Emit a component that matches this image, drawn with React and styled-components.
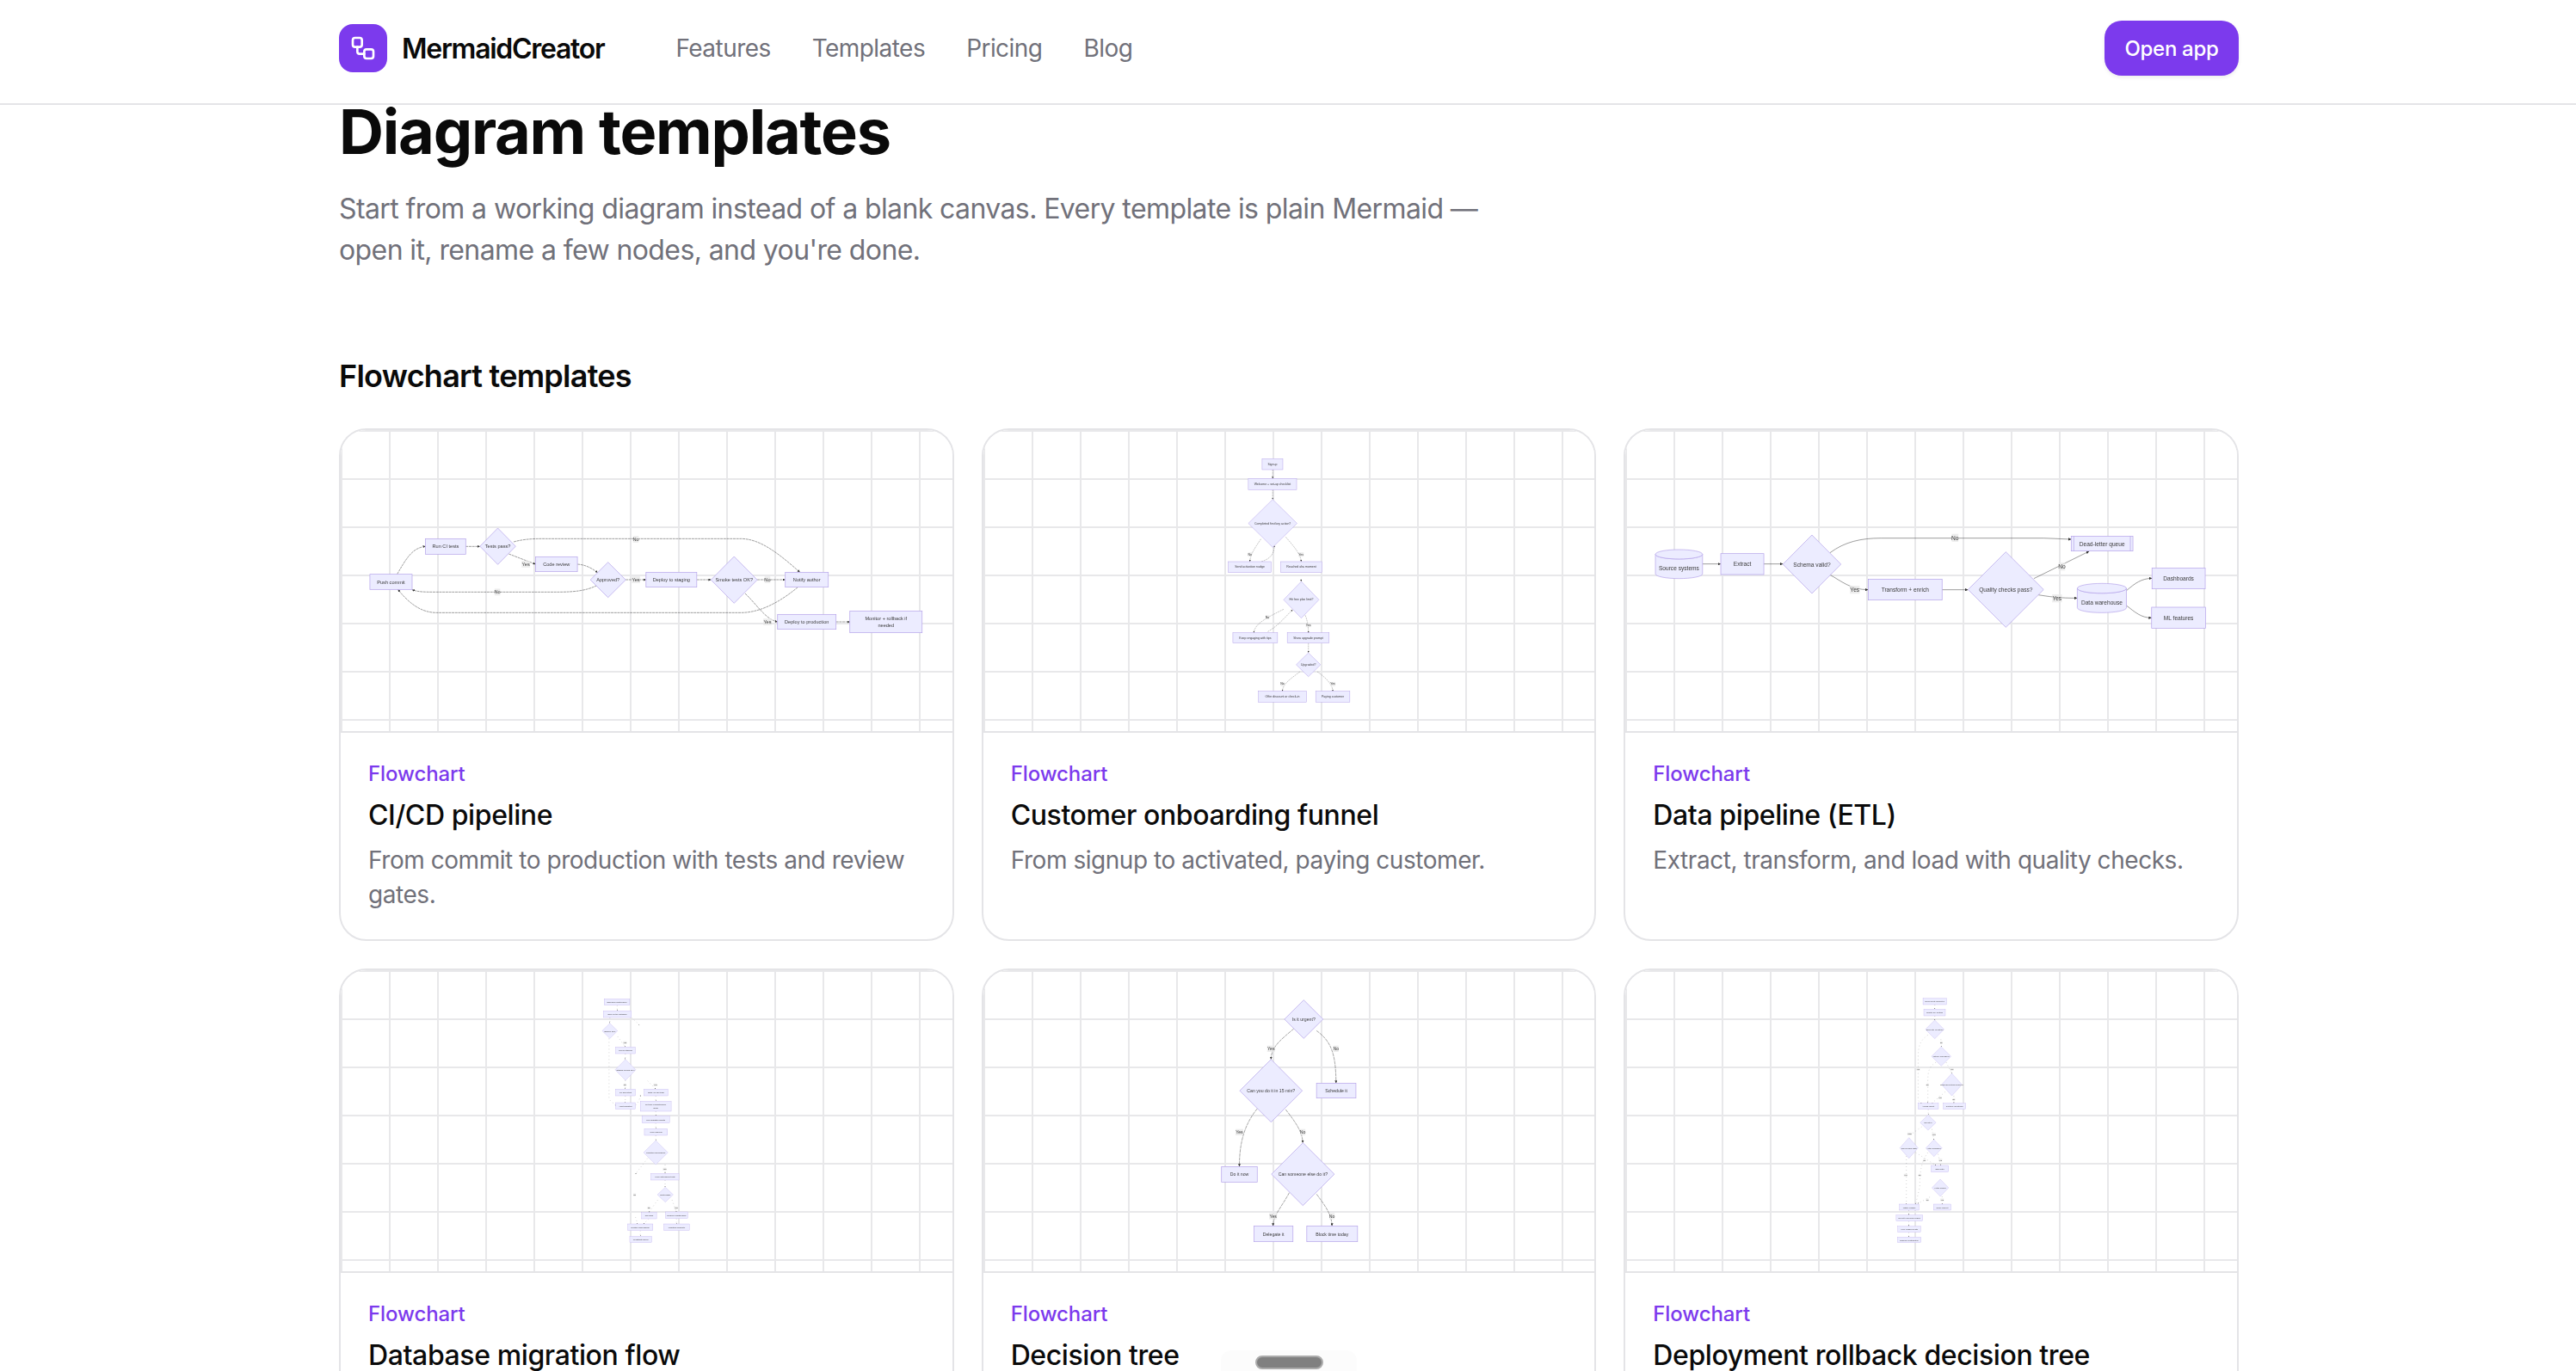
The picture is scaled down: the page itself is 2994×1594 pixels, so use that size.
import React from "react";
import styled, { createGlobalStyle } from "styled-components";
import { Workflow } from "lucide-react";

const Global = createGlobalStyle`
  html, body { margin: 0; padding: 0; height: 100%; overflow: hidden; background: #fff; }
  body { font-family: Inter, "Liberation Sans", sans-serif; color: #0a0a0a; }
  * { box-sizing: border-box; }
`;

const Page = styled.div`height: 1594px; overflow: hidden; background: #fff;`;
const Header = styled.header`height: 122px; border-bottom: 2px solid #e4e4e7; background: #fff; position: relative; z-index: 2;`;
const HeaderInner = styled.div`width: 2208px; height: 112px; margin: 0 auto; display: flex; align-items: center; transform: translateX(1px);`;
const Brand = styled.div`display: flex; align-items: center; gap: 17px; margin-right: 83px;`;
const LogoBox = styled.div`width: 56px; height: 56px; border-radius: 16px; background: #7c3aed; color: #fff; display: flex; align-items: center; justify-content: center;`;
const BrandName = styled.span`font-size: 32px; font-weight: 600; letter-spacing: -1.28px;`;
const Nav = styled.nav`display: flex; gap: 48px; flex: 1;`;
const NavLink = styled.a`font-size: 28px; color: #71717a; letter-spacing: -0.55px;`;
const OpenButton = styled.button`width: 156px; height: 64px; border: 0; border-radius: 20px; background: #7c3aed; color: #fff; font: 500 24px Inter, sans-serif; letter-spacing: -0.3px; box-shadow: 0 2px 4px rgba(0,0,0,.08);`;

const Main = styled.main`width: 2208px; margin: 0 auto; transform: translateX(1px);`;
const Title = styled.h1`font-size: 72px; line-height: 80px; font-weight: 700; letter-spacing: -1.22px; margin: -9px 0 26px;`;
const Lead = styled.p`font-size: 32px; line-height: 48px; letter-spacing: -0.6px; color: #71717a; margin: 0 0 98px; max-width: 1344px;`;
const SectionTitle = styled.h2`font-size: 36px; line-height: 48px; font-weight: 600; letter-spacing: -0.75px; margin: 0 0 37px;`;
const Grid = styled.div`display: grid; grid-template-columns: repeat(3, 1fr); gap: 32px;`;
const Card = styled.article`border: 2px solid #e4e4e7; border-radius: 32px; overflow: hidden; background: #fff;`;
const Preview = styled.div`
  height: 352px; border-bottom: 2px solid #e4e4e7; background-color: #fff;
  background-image: linear-gradient(to right, #e8e8ea 2px, transparent 2px), linear-gradient(to bottom, #e8e8ea 2px, transparent 2px);
  background-size: 56px 56px;
`;
const DiagramSvg = styled.svg`display: block; filter: blur(0.4px);`;
const NodeRect = styled.rect`fill: #ececff; stroke: #b5a3ea;`;
const NodePoly = styled.polygon`fill: #ececff; stroke: #b5a3ea;`;
const NodePath = styled.path`fill: #ececff; stroke: #b5a3ea;`;
const Edge = styled.path`fill: none; stroke: #3d3d3d;`;
const NodeLine = styled.line`stroke: #b5a3ea;`;
const LabelBg = styled.rect`fill: rgba(232, 232, 232, 0.8);`;
const DiagramText = styled.text`font-family: "Liberation Sans", sans-serif; fill: #3a3a3a; text-anchor: middle; dominant-baseline: central;`;
const ArrowHead = styled.path`fill: #333;`;
const Info = styled.div`padding: 32px 32px 32px;`;
const Tag = styled.div`font-size: 24px; line-height: 32px; font-weight: 500; letter-spacing: -0.1px; color: #7c3aed;`;
const CardTitle = styled.h3`font-size: 32px; line-height: 44px; font-weight: 500; letter-spacing: -0.4px; margin: 10px 0 10px; color: #0a0a0a;`;
const CardDesc = styled.p`font-size: 28px; line-height: 40px; letter-spacing: -0.45px; color: #71717a; margin: 0; min-height: 80px;`;
const Halo = styled.div`position: fixed; left: 1419px; top: 1570px; width: 158px; height: 24px; border-radius: 12px 12px 0 0; background: rgba(252,252,252,.9); display: flex; justify-content: center; align-items: flex-start; padding-top: 6px; z-index: 5;`;
const Pill = styled.div`width: 79px; height: 16px; border-radius: 8px; background: #808080; border: 2px solid #ababab;`;

const SX = 1568 / 740;
const r = (x1, y1, x2, y2, t) => ({ k: "r", x1, y1, x2, y2, t });
const d = (x1, y1, x2, y2, t) => ({ k: "d", x1, y1, x2, y2, t });
const c = (x1, y1, x2, y2, t) => ({ k: "c", x1, y1, x2, y2, t });
const s = (x1, y1, x2, y2, t) => ({ k: "s", x1, y1, x2, y2, t });

const DIAGRAMS = [
  {
    dx: -6.67, dy: -10, fs: 5.6, sw: 0.7, es: 0.5, ar: 3, dash: "3 0.7",
    nodes: [
      r(86,533,190,586,"Push commit"), r(223,409,322,463,"Run CI tests"), d(357,372,445,499,"Tests pass?"),
      r(494,472,597,524,"Code review"), d(629,491,716,614,"Approved?"), r(766,526,891,578,"Deploy to staging"),
      d(926,471,1040,634,"Smoke tests OK?"), r(1109,526,1215,578,"Notify author"), r(1090,673,1234,725,"Deploy to production"),
      r(1268,661,1446,737,"Monitor + rollback if\nneeded"),
    ],
    edges: [
      "M153,533 C175,480 190,440 223,436", "M322,436 L357,436", "M428,462 L494,498",
      "M440,420 C470,408 500,409 520,409 L1000,409 C1050,409 1100,470 1145,526",
      "M597,498 C620,500 635,515 647,527", "M645,572 C620,590 590,595 550,595 L250,595 C220,595 205,595 190,587",
      "M716,552 L766,552", "M891,552 L926,552", "M1040,552 L1109,552", "M1010,600 C1040,640 1060,690 1090,699",
      "M1140,578 C1100,625 1050,667 1000,667 L250,667 C210,667 180,630 155,586", "M1234,699 L1268,699",
    ],
    labels: [[741,411,"No"],[470,498,"Yes"],[400,595,"No"],[741,552,"Yes"],[1065,552,"No"],[1065,699,"Yes"]],
  },
  {
    dx: -2.67, dy: -10, fs: 3.5, sw: 0.5, es: 0.3, ar: 2, dash: "2 0.8",
    nodes: [
      r(692,130,743,168,"Signup"), r(658,199,777,238,"Welcome + set-up checklist"), d(658,272,778,439,"Completed first key action?"),
      r(609,489,714,527,"Send activation nudge"), r(738,489,839,527,"Reached aha moment"), d(745,558,832,686,"Hit free plan limit?"),
      r(620,737,730,773,"Keep engaging with tips"), r(754,737,857,773,"Show upgrade prompt"), d(776,807,836,890,"Upgraded?"),
      r(683,941,801,979,"Offer discount or check-in"), r(824,941,908,979,"Paying customer"),
    ],
    edges: [
      "M718,168 L718,199", "M718,238 L718,272", "M689,410 C675,440 662,465 662,489", "M690,489 C710,480 722,465 722,433",
      "M750,403 C770,435 788,465 788,489", "M788,550 L788,558", "M745,655 C710,680 672,705 672,737", "M706,733 C730,715 750,680 767,657",
      "M798,676 C803,690 806,715 806,737", "M806,773 L806,807", "M785,873 C765,895 742,915 742,941", "M828,873 C845,890 866,915 866,941",
    ],
    labels: [[662,464,"No"],[788,464,"Yes"],[705,683,"No"],[806,710,"Yes"],[742,916,"No"],[866,916,"Yes"]],
  },
  {
    dx: -9.33, dy: -10, fs: 6.6, sw: 0.7, es: 0.5, ar: 3.4, dash: "none",
    nodes: [
      c(94,447,210,548,"Source systems"), r(255,461,361,534,"Extract"), d(408,396,551,600,"Schema valid?"),
      r(618,550,800,623,"Transform + enrich"), d(864,455,1050,718,"Quality checks pass?"), s(1118,400,1270,452,"Dead-letter queue"),
      c(1133,565,1254,667,"Data warehouse"), r(1317,511,1448,584,"Dashboards"), r(1316,648,1449,721,"ML features"),
    ],
    edges: [
      "M210,497 L255,497", "M361,497 L408,497", "M524,458 C560,420 600,407 650,407 L1050,407 L1118,411",
      "M524,535 C550,555 575,587 618,587", "M800,587 L864,587", "M1026,548 L1162,453", "M1037,605 C1060,610 1090,617 1133,616",
      "M1254,590 C1275,565 1290,548 1317,547", "M1254,642 C1275,665 1290,685 1316,685",
    ],
    labels: [[832,406,"No"],[585,587,"Yes"],[1095,506,"No"],[1083,617,"Yes"]],
  },
  {
    dx: -6.67, dy: -8, fs: 2.3, sw: 0.3, es: 0.22, ar: 1.2, dash: "1 3",
    nodes: [
      r(663,124,726,146,"Schedule maintenance"), r(661,166,730,189,"Back up the database"), d(658,209,696,262,"Backup OK?"),
      r(691,292,740,315,"Run on staging"), d(690,335,741,408,"Staging checks OK?"), r(691,439,740,462,"Fix and retest"),
      r(691,486,740,509,"Abort migration"), r(761,439,820,462,"Notify on-call team"), r(752,481,828,516,"Put app in maintenance\nmode"),
      r(756,532,824,557,"Run migration scripts"), r(762,577,819,600,"Verify schema"), d(760,618,820,702,"Migration successful?"),
      r(778,733,847,756,"Verify with smoke tests"), d(794,781,833,833,"Tests pass?"), r(755,869,792,891,"Roll back"),
      r(814,867,869,890,"Remove maintenance"), r(721,909,783,932,"Restore from backup"), r(810,909,873,932,"Migration complete"),
      r(726,952,780,974,"Investigate failure"),
    ],
    edges: [
      "M695,146 L695,166", "M677,189 L677,209", "M696,255 L715,292", "M675,262 L675,470 C675,480 690,490 691,497", "M715,315 L715,335",
      "M715,408 L715,439", "M715,462 L715,486", "M740,495 C750,480 752,465 752,460", "M770,410 L790,439", "M790,462 L790,481", "M790,516 L790,532",
      "M790,557 L790,577", "M790,600 L790,618", "M813,702 L813,733", "M813,756 L813,781", "M795,825 L773,869", "M830,825 L841,867",
      "M841,890 L841,909", "M773,891 L760,909", "M770,680 L740,735", "M740,885 L745,909", "M752,932 L752,952", "M730,189 L750,215",
    ],
    labels: [[714,277,"Yes"],[714,424,"No"],[789,424,"Yes"],[812,718,"Yes"],[738,807,"No"],[773,853,"No"],[840,853,"Yes"]],
  },
  {
    dx: -2.67, dy: -8, fs: 5.2, sw: 0.7, es: 0.45, ar: 3, dash: "4 0.7",
    nodes: [
      d(747,128,842,262,"Is it urgent?"), d(637,335,791,554,"Can you do it in 15 min?"), r(826,418,923,470,"Schedule it"),
      r(592,709,680,763,"Do it now"), d(715,626,870,845,"Can someone else do it?"), r(672,916,768,971,"Delegate it"), r(802,916,927,971,"Block time today"),
    ],
    edges: [
      "M770,228 C740,265 714,290 714,335", "M826,235 C860,270 874,310 874,418", "M680,507 C650,560 636,620 636,709",
      "M750,510 C775,555 792,590 792,626", "M759,800 C740,850 719,880 719,916", "M826,805 C850,850 864,880 864,916",
    ],
    labels: [[714,298,"Yes"],[874,298,"No"],[636,589,"Yes"],[792,589,"No"],[719,882,"Yes"],[864,882,"No"]],
  },
  {
    dx: -9.33, dy: -8, fs: 2.2, sw: 0.3, es: 0.22, ar: 1.2, dash: "1 3",
    nodes: [
      r(753,122,811,144,"Deployment completed"), r(755,160,808,183,"Monitor key metrics"), d(759,198,805,263,"Error rate elevated?"),
      d(774,291,822,358,"Latency increased?"), d(799,384,849,462,"Business metrics dropped?"), r(741,488,791,509,"Assess impact"),
      r(803,488,858,509,"Continue monitoring"), d(746,529,785,582,"Severity?"), d(696,608,741,680,"Can roll back fast?"),
      d(760,615,800,674,"Hotfix available?"), r(773,705,816,728,"Ship hotfix"), d(775,753,816,813,"Hotfix works?"),
      r(695,840,743,861,"Initiate rollback"), r(779,840,822,861,"Close incident"), r(687,878,752,899,"Revert to previous version"),
      r(691,917,747,938,"Verify rollback health"), r(690,955,748,974,"Schedule postmortem"),
    ],
    edges: [
      "M782,144 L782,160", "M782,183 L782,198", "M797,265 L798,291", "M765,250 C745,270 741,290 741,330 L741,470 C741,480 745,488 750,488",
      "M785,345 C770,360 765,370 765,410 L765,488", "M810,345 L824,384", "M808,448 L775,488", "M829,462 L829,488", "M766,509 L766,529",
      "M750,570 L722,598", "M775,578 L780,615", "M712,672 L712,840", "M735,660 L785,705", "M765,660 C750,690 745,720 745,780 L735,840",
      "M790,665 L797,705", "M770,815 L740,838", "M800,813 L800,840", "M718,861 L718,878", "M718,899 L718,917", "M718,938 L718,955",
    ],
    labels: [[798,277,"No"],[741,370,"Yes"],[764,424,"No"],[824,370,"Yes"],[795,469,"Yes"],[829,475,"No"],[720,595,"High"],[780,596,"Low"],[757,686,"No"],[796,686,"Yes"],[710,739,"Yes"],[745,739,"No"],[764,825,"No"],[800,825,"Yes"]],
  },
];

function Diagram({ id, data }) {
  const X = (v) => v / SX + data.dx;
  const Y = (v) => v / 3 + data.dy;
  const conv = (p) => p.replace(/(\d+(?:\.\d+)?),(\d+(?:\.\d+)?)/g, (_, a, b) => `${X(+a).toFixed(2)},${Y(+b).toFixed(2)}`);
  const { fs, sw, es, ar, dash } = data;
  const mid = `arrow-${id}`;
  return (
    <DiagramSvg width="100%" height="350" aria-hidden="true">
      <defs>
        <marker id={mid} markerUnits="userSpaceOnUse" markerWidth={ar} markerHeight={ar} refX={ar} refY={ar / 2} orient="auto">
          <ArrowHead d={`M0,0 L${ar},${ar / 2} L0,${ar} Z`} />
        </marker>
      </defs>
      {data.edges.map((e, i) => <Edge key={i} d={conv(e)} strokeWidth={es} strokeDasharray={dash} markerEnd={`url(#${mid})`} />)}
      {data.nodes.map((n, i) => {
        const x1 = X(n.x1), x2 = X(n.x2), y1 = Y(n.y1), y2 = Y(n.y2);
        const cx = (x1 + x2) / 2, cy = (y1 + y2) / 2;
        const lines = n.t.split("\n");
        let shape;
        if (n.k === "d") shape = <NodePoly points={`${cx},${y1} ${x2},${cy} ${cx},${y2} ${x1},${cy}`} strokeWidth={sw} />;
        else if (n.k === "c") {
          const ry = (x2 - x1) * 0.1;
          shape = (
            <>
              <NodePath strokeWidth={sw} d={`M${x1},${y1 + ry} A${(x2 - x1) / 2},${ry} 0 0 0 ${x2},${y1 + ry} L${x2},${y2 - ry} A${(x2 - x1) / 2},${ry} 0 0 1 ${x1},${y2 - ry} Z`} />
              <NodePath strokeWidth={sw} d={`M${x1},${y1 + ry} A${(x2 - x1) / 2},${ry} 0 0 1 ${x2},${y1 + ry} A${(x2 - x1) / 2},${ry} 0 0 1 ${x1},${y1 + ry} Z`} />
            </>
          );
        } else {
          shape = (
            <>
              <NodeRect x={x1} y={y1} width={x2 - x1} height={y2 - y1} strokeWidth={sw} />
              {n.k === "s" && <NodeLine x1={x1 + 3} x2={x1 + 3} y1={y1} y2={y2} strokeWidth={sw} />}
              {n.k === "s" && <NodeLine x1={x2 - 3} x2={x2 - 3} y1={y1} y2={y2} strokeWidth={sw} />}
            </>
          );
        }
        const ty = n.k === "c" ? cy + (y2 - y1) * 0.15 : cy;
        return (
          <g key={i}>
            {shape}
            {lines.map((l, j) => (
              <DiagramText key={j} x={cx} y={ty + (j - (lines.length - 1) / 2) * fs * 1.45} fontSize={fs}>{l}</DiagramText>
            ))}
          </g>
        );
      })}
      {data.labels.map(([lx, ly, t], i) => {
        const w = t.length * fs * 0.55 + 0.4, h = fs * 1.4;
        return (
          <g key={i}>
            <LabelBg x={X(lx) - w / 2} y={Y(ly) - h / 2} width={w} height={h} />
            <DiagramText x={X(lx)} y={Y(ly)} fontSize={fs}>{t}</DiagramText>
          </g>
        );
      })}
    </DiagramSvg>
  );
}

const CARDS = [
  ["CI/CD pipeline", "From commit to production with tests and review gates."],
  ["Customer onboarding funnel", "From signup to activated, paying customer."],
  ["Data pipeline (ETL)", "Extract, transform, and load with quality checks."],
  ["Database migration flow"],
  ["Decision tree"],
  ["Deployment rollback decision tree"],
];

export default function App() {
  return (
    <Page>
      <Global />
      <Header>
        <HeaderInner>
          <Brand>
            <LogoBox><Workflow size={32} strokeWidth={2} /></LogoBox>
            <BrandName>MermaidCreator</BrandName>
          </Brand>
          <Nav>
            <NavLink>Features</NavLink>
            <NavLink>Templates</NavLink>
            <NavLink>Pricing</NavLink>
            <NavLink>Blog</NavLink>
          </Nav>
          <OpenButton>Open app</OpenButton>
        </HeaderInner>
      </Header>
      <Main>
        <Title>Diagram templates</Title>
        <Lead>Start from a working diagram instead of a blank canvas. Every template is plain Mermaid — open it, rename a few nodes, and you're done.</Lead>
        <SectionTitle>Flowchart templates</SectionTitle>
        <Grid>
          {CARDS.map(([t, desc], i) => (
            <Card key={t}>
              <Preview><Diagram id={i} data={DIAGRAMS[i]} /></Preview>
              <Info>
                <Tag>Flowchart</Tag>
                <CardTitle>{t}</CardTitle>
                {desc && <CardDesc>{desc}</CardDesc>}
              </Info>
            </Card>
          ))}
        </Grid>
      </Main>
      <Halo><Pill /></Halo>
    </Page>
  );
}
